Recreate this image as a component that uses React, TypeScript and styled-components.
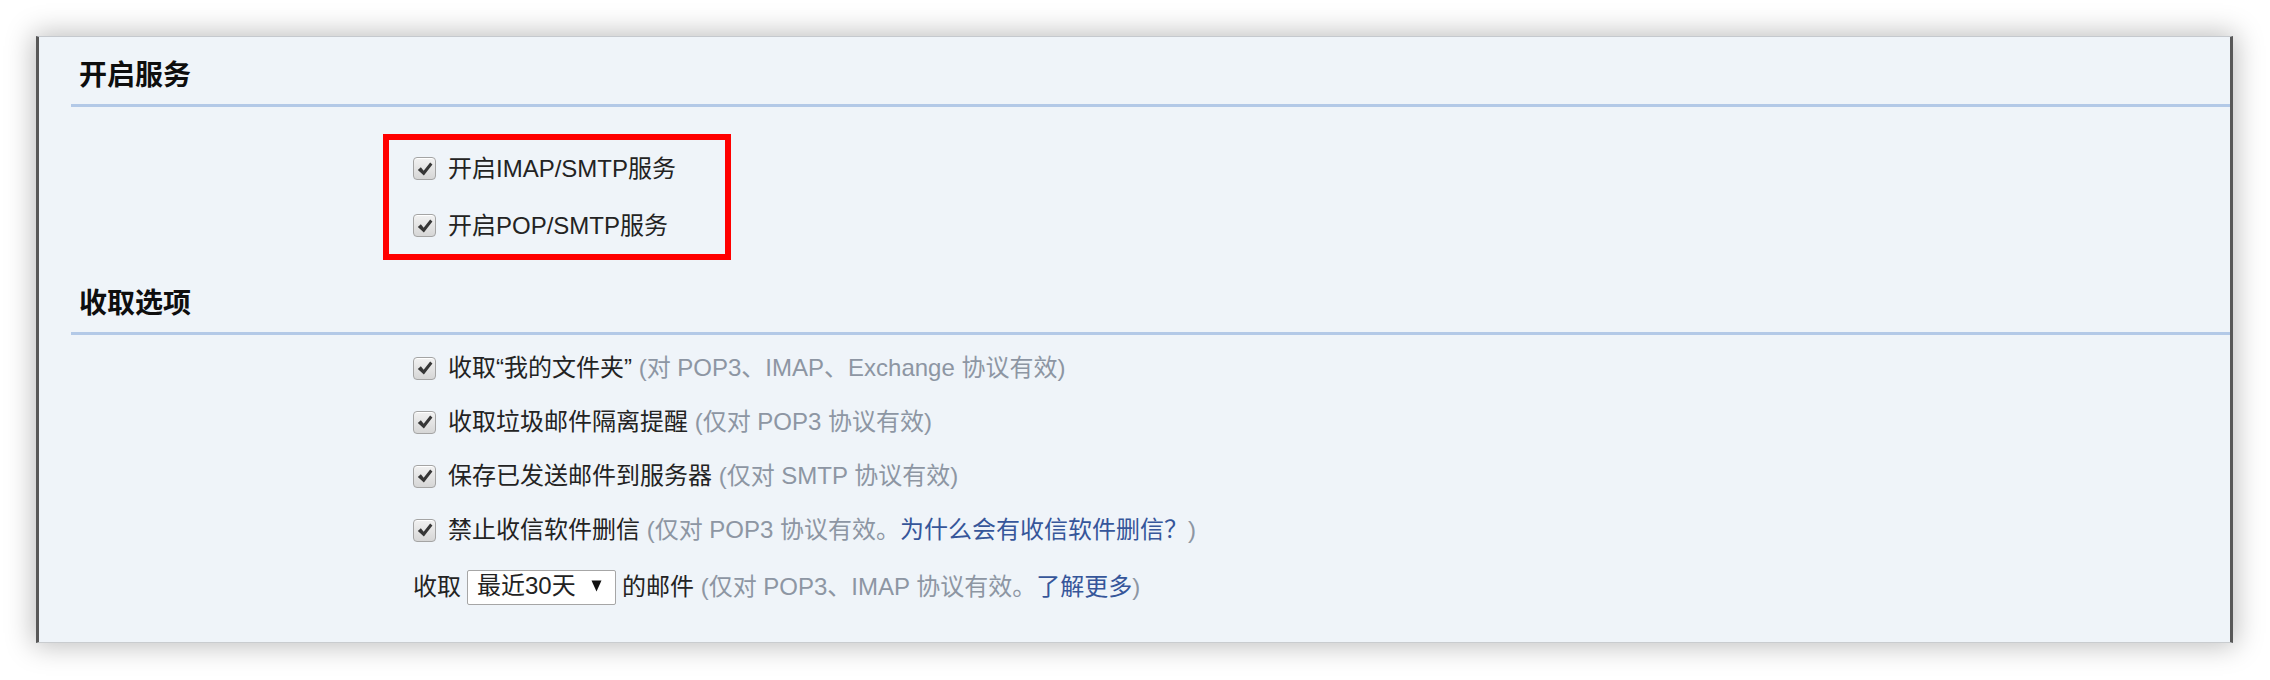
import React from "react";
import styled, { createGlobalStyle } from "styled-components";

const GlobalStyle = createGlobalStyle`
  html, body { margin: 0; padding: 0; background: #ffffff; }
  body { font-family: "Liberation Sans", "Noto Sans CJK SC", sans-serif; }
`;

const Page = styled.div`
  padding: 36px 0 37px 36px;
`;

const Panel = styled.div`
  box-sizing: border-box;
  width: 2197px;
  height: 607px;
  background: #eff4f9;
  border-left: 3px solid #585858;
  border-right: 3px solid #585858;
  border-top: 1px solid #c5c9ce;
  border-bottom: 1px solid #c9cccf;
  box-shadow: 0 0 26px 3px rgba(0, 0, 0, 0.26);
  padding: 19px 0 0 32px;
  color: #333333;
  font-size: 24px;
  overflow: hidden;
`;

const Heading = styled.h2<{ $gap: number }>`
  margin: ${(p) => p.$gap}px 0 0 0;
  padding: 0 0 8px 8px;
  font-size: 28px;
  line-height: 40px;
  font-weight: bold;
  color: #0e0e0e;
  border-bottom: 3px solid #b3c9e7;
`;

const SectionBody = styled.div<{ $top: number; $left: number }>`
  padding: ${(p) => p.$top}px 0 0 ${(p) => p.$left}px;
`;

const Highlight = styled.div`
  box-sizing: border-box;
  width: 348px;
  border: 6px solid #ff0000;
  padding-left: 24px;
`;

const Row = styled.div<{ $h: number; $gap?: number }>`
  display: flex;
  align-items: center;
  height: ${(p) => p.$h}px;
  gap: ${(p) => p.$gap ?? 12}px;
  white-space: nowrap;
  line-height: 30px;
`;

const Box = styled.span`
  box-sizing: border-box;
  flex: none;
  display: inline-flex;
  align-items: center;
  justify-content: center;
  width: 23px;
  height: 23px;
  border: 1px solid #a4a4a4;
  border-radius: 4px;
  background: linear-gradient(#f2f2f2, #d6d6d6);
  box-shadow: inset 0 1px 0 #ffffff;
`;

const Label = styled.span`
  color: #232323;
`;

const Note = styled.span`
  color: #8d96a3;
`;

const Link = styled.a`
  color: #36569a;
  text-decoration: none;
`;

const Select = styled.span`
  box-sizing: border-box;
  display: inline-flex;
  align-items: center;
  justify-content: space-between;
  width: 149px;
  height: 35px;
  padding: 0 13px 2px 9px;
  background: #ffffff;
  border: 1px solid #a6a6a6;
  border-radius: 2px;
  color: #222222;
`;

const Check = () => (
  <Box>
    <svg width="18" height="18" viewBox="0 0 16 16" aria-hidden="true">
      <path
        d="M1.6 8.8 L4.3 6.5 L6.8 9.5 L12.6 2.2 L14.6 3.9 L7.0 13.8 Z"
        fill="#363636"
      />
    </svg>
  </Box>
);

const Arrow = () => (
  <svg width="11" height="12" viewBox="0 0 11 12" aria-hidden="true">
    <path d="M0.5 0.5 L10.5 0.5 L5.5 11.5 Z" fill="#111111" />
  </svg>
);

export default function App() {
  return (
    <>
      <GlobalStyle />
      <Page>
        <Panel>
          <Heading $gap={0}>开启服务</Heading>
          <SectionBody $top={27} $left={312}>
            <Highlight>
              <Row $h={57}>
                <Check />
                <Label>开启IMAP/SMTP服务</Label>
              </Row>
              <Row $h={57}>
                <Check />
                <Label>开启POP/SMTP服务</Label>
              </Row>
            </Highlight>
          </SectionBody>

          <Heading $gap={24}>收取选项</Heading>
          <SectionBody $top={6} $left={342}>
            <Row $h={54}>
              <Check />
              <span>
                <Label>收取“我的文件夹”</Label>{" "}
                <Note>(对 POP3、IMAP、Exchange 协议有效)</Note>
              </span>
            </Row>
            <Row $h={54}>
              <Check />
              <span>
                <Label>收取垃圾邮件隔离提醒</Label>{" "}
                <Note>(仅对 POP3 协议有效)</Note>
              </span>
            </Row>
            <Row $h={54}>
              <Check />
              <span>
                <Label>保存已发送邮件到服务器</Label>{" "}
                <Note>(仅对 SMTP 协议有效)</Note>
              </span>
            </Row>
            <Row $h={54}>
              <Check />
              <span>
                <Label>禁止收信软件删信</Label>{" "}
                <Note>
                  (仅对 POP3 协议有效。<Link href="#">为什么会有收信软件删信？</Link>)
                </Note>
              </span>
            </Row>
            <Row $h={60} $gap={6}>
              <Label>收取</Label>
              <Select>
                <span>最近30天</span>
                <Arrow />
              </Select>
              <span>
                <Label>的邮件</Label>{" "}
                <Note>
                  (仅对 POP3、IMAP 协议有效。<Link href="#">了解更多</Link>)
                </Note>
              </span>
            </Row>
          </SectionBody>
        </Panel>
      </Page>
    </>
  );
}
